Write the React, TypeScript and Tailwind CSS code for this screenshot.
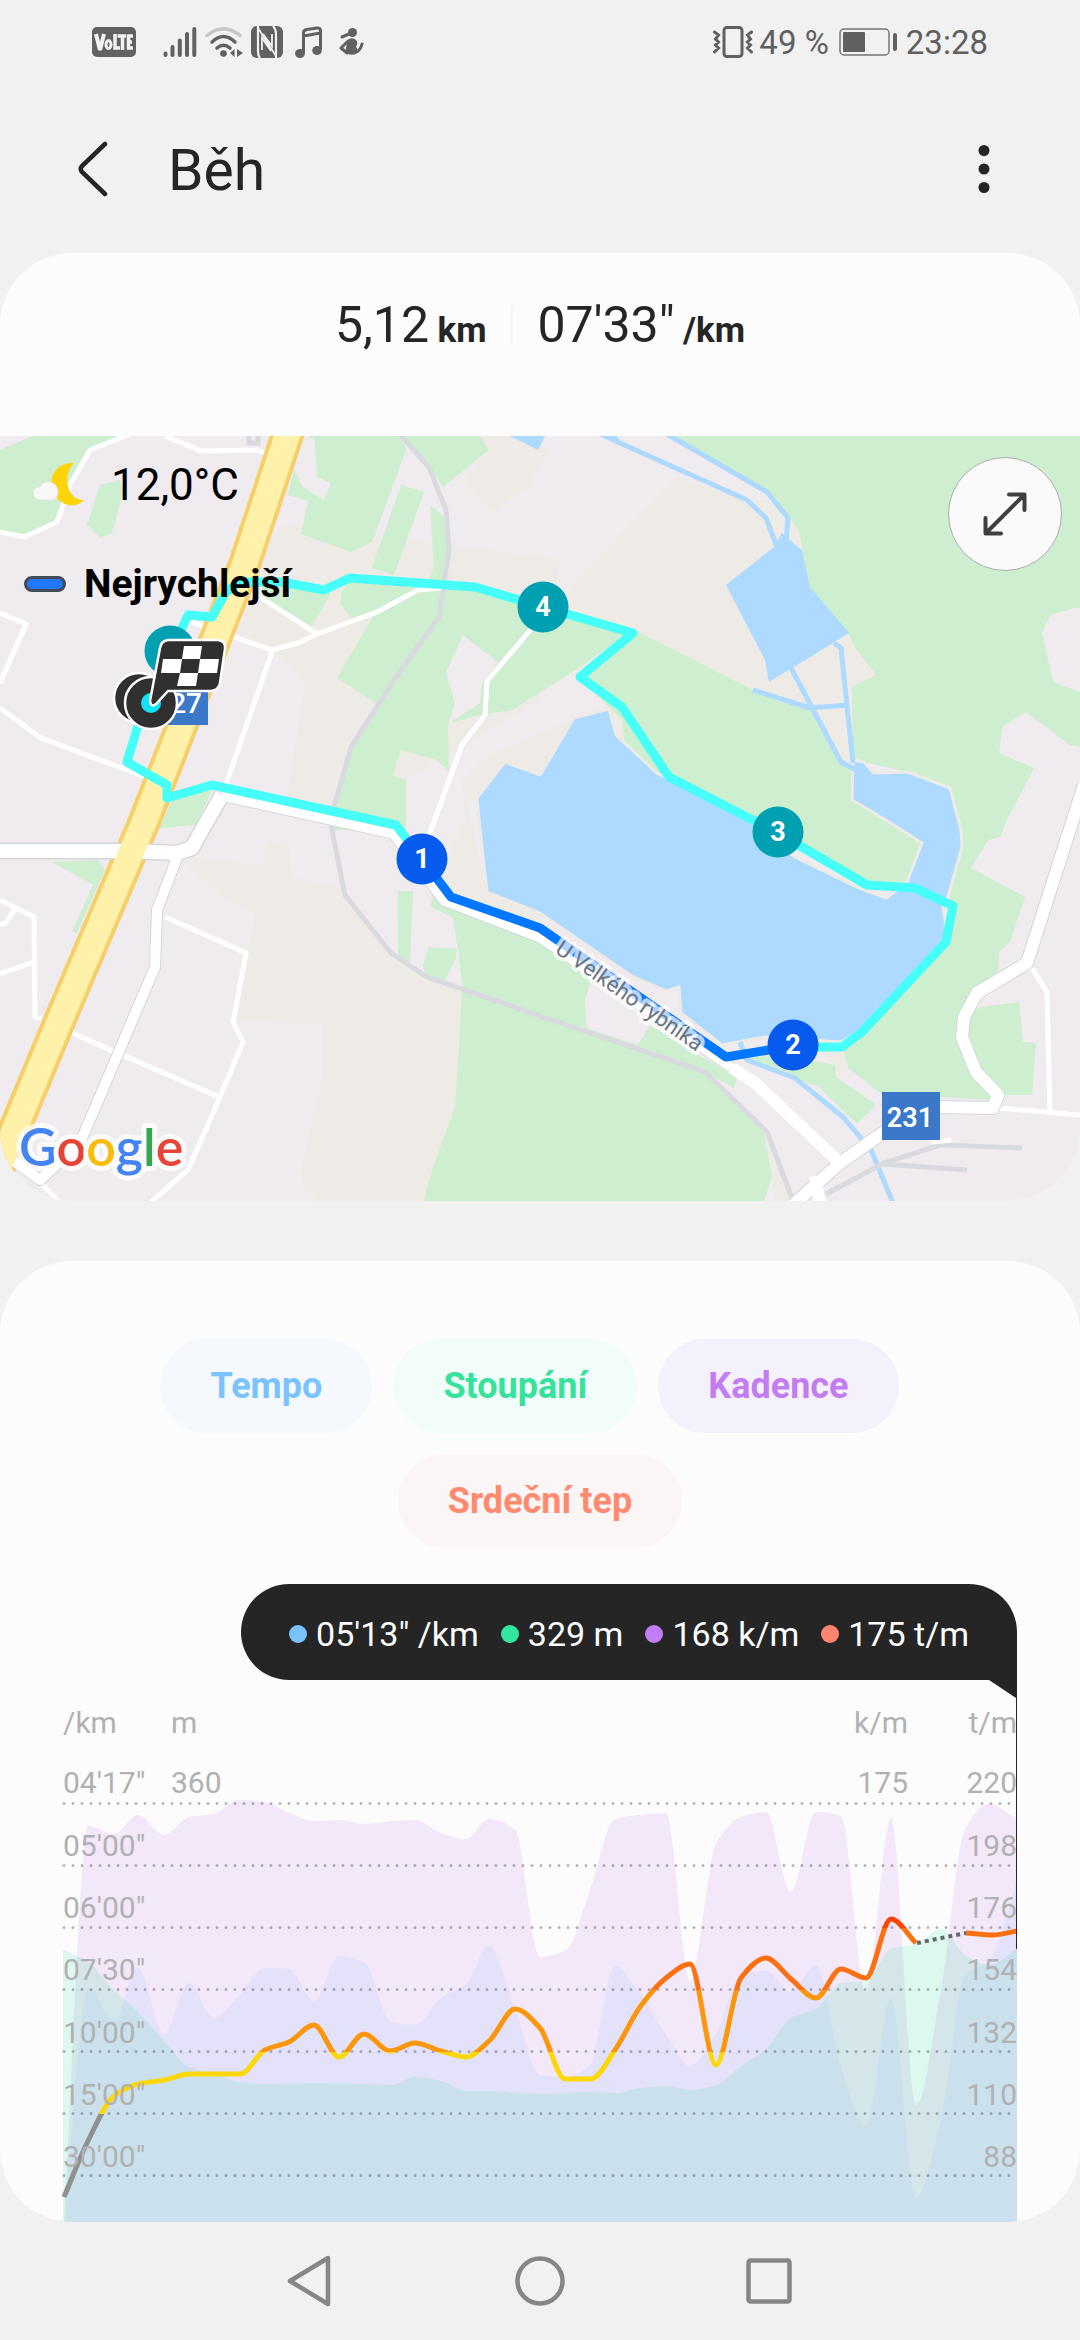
type Point = [number, number];

/** Smooth path through the points, without overshooting between neighbours. */
function smoothPath(points: Point[]): string {
  const n = points.length;
  const slopes = points.slice(1).map(([x, y], i) => (y - points[i][1]) / (x - points[i][0]));
  const tangents = points.map((_, i) => {
    if (i === 0) return slopes[0];
    if (i === n - 1) return slopes[n - 2];
    const a = slopes[i - 1];
    const b = slopes[i];
    return a * b <= 0 ? 0 : (2 * a * b) / (a + b);
  });
  let d = `M${points[0][0]} ${points[0][1]}`;
  for (let i = 1; i < n; i++) {
    const [x0, y0] = points[i - 1];
    const [x1, y1] = points[i];
    const h = (x1 - x0) / 3;
    d += `C${x0 + h} ${y0 + h * tangents[i - 1]} ${x1 - h} ${y1 - h * tangents[i]} ${x1} ${y1}`;
  }
  return d;
}

function areaPath(points: Point[]): string {
  const last = points[points.length - 1];
  return `${smoothPath(points)}L${last[0]} 2222L${points[0][0]} 2222Z`;
}

const cadence: Point[] = [
  [64, 2222], [85, 1840], [88, 1826], [114, 1834], [138, 1815], [164, 1835], [189, 1817], [214, 1814], [239, 1800], [265, 1802],
  [289, 1813], [314, 1821], [339, 1820], [364, 1824], [391, 1821], [415, 1820], [441, 1833], [466, 1839], [489, 1819],
  [515, 1830], [540, 1957], [566, 1950], [590, 1890], [615, 1819], [640, 1815], [666, 1813], [690, 1981], [716, 1844],
  [741, 1817], [766, 1812], [791, 1892], [816, 1812], [841, 1816], [866, 1992], [891, 1818], [916, 2105], [941, 1989],
  [965, 1829], [989, 1804], [1017, 1819],
];

const elevation: Point[] = [
  [63, 1950], [88, 1962], [114, 1990], [138, 2012], [164, 2041], [189, 2067], [214, 2074], [239, 2082], [265, 2084],
  [314, 2083], [364, 2084], [391, 2085], [415, 2077], [441, 2081], [466, 2091], [489, 2091], [540, 2094], [590, 2092],
  [615, 2093], [640, 2088], [666, 2086], [690, 2090], [716, 2085], [741, 2066], [766, 2049], [791, 2018], [816, 2009],
  [841, 1983], [866, 1981], [891, 1949], [916, 1944], [941, 1929], [965, 1955], [989, 1965], [1017, 1949],
];

const pace: Point[] = [
  [65, 2222], [84, 2000], [88, 1987], [114, 2021], [138, 1968], [164, 2034], [189, 1983], [214, 2018], [239, 1996], [265, 1968],
  [289, 1969], [314, 2001], [339, 1956], [364, 1962], [391, 2022], [415, 2025], [441, 1998], [466, 1984], [489, 1946],
  [515, 2009], [540, 2075], [566, 2077], [590, 2065], [615, 1966], [640, 1994], [666, 2035], [690, 2066], [716, 2034],
  [741, 1976], [766, 1971], [791, 1992], [816, 1965], [841, 2067], [866, 2126], [891, 1998], [916, 2197], [941, 2119],
  [965, 1976], [989, 1961], [1017, 1881],
];

const heartRate: Point[] = [
  [64, 2197], [88, 2141], [114, 2096], [138, 2084], [164, 2080], [189, 2074], [214, 2074], [240, 2074], [265, 2050],
  [289, 2042], [314, 2025], [339, 2057], [364, 2034], [390, 2051], [415, 2043], [441, 2051], [466, 2057], [490, 2040],
  [515, 2009], [540, 2028], [565, 2079], [591, 2079], [615, 2050], [640, 2007], [666, 1978], [690, 1964], [716, 2065],
  [741, 1978], [766, 1958], [791, 1979], [816, 1998], [841, 1969], [866, 1978], [891, 1919], [916, 1943],
];

const heartRateEnd: Point[] = [[966, 1933], [993, 1935], [1017, 1931]];

const gridLines = [1803, 1865, 1927, 1989, 2051, 2113, 2175];
const paceLabels = ["/km", "04'17\"", "05'00\"", "06'00\"", "07'30\"", "10'00\"", "15'00\"", "30'00\""];
const heartLabels = ["t/m", "220", "198", "176", "154", "132", "110", "88"];
const labelBaselines = [1733, 1793, 1856, 1918, 1980, 2043, 2105, 2167];

const kilometres = [
  { x: 170, y: 651, label: "5", fill: "#00a0b3" },
  { x: 543, y: 607, label: "4", fill: "#00a0b3" },
  { x: 778, y: 832, label: "3", fill: "#00a0b3" },
  { x: 793, y: 1045, label: "2", fill: "#065aee" },
  { x: 422, y: 859, label: "1", fill: "#065aee" },
];

const green = "#cdeecf";
const beige = "#eeebe6";
const water = "#aedaff";
const land = "#efebef";

function StatusBar() {
  return (
    <div className="flex h-[84px] items-center justify-between pl-[92px] pr-[92px] text-[33px] leading-none text-[#5f5f5f]">
      <div className="flex items-center">
        <span className="flex h-[30px] w-[44px] items-center justify-center rounded-[5px] bg-[#616161]">
          <svg width="40" height="24" viewBox="0 0 40 24" role="img" aria-label="VoLTE">
            <g fill="none" stroke="#f1f1f1" strokeWidth="4">
              <path d="M2 4L6 20L10 4" />
              <ellipse cx="14.500" cy="14.500" rx="2.500" ry="4" strokeWidth="3" />
              <path d="M21 4V18H26M23.500 6H32M28.500 6V20M39 6H34.500V18H39M34 12H38" strokeWidth="3.500" />
            </g>
          </svg>
        </span>
        <svg className="ml-[27px]" width="34" height="32" viewBox="0 0 34 32" aria-hidden="true">
          <g stroke="#616161" strokeWidth="4" strokeLinecap="round">
            <path d="M2.500 27.500V29M9.500 21V29M16.800 14.500V29M24 8V29M31.300 3V29" />
          </g>
        </svg>
        <svg className="ml-[8px]" width="38" height="32" viewBox="0 0 38 32" aria-hidden="true">
          <g fill="none" strokeLinecap="round" strokeWidth="3.500">
            <path d="M2 9.500Q18.500-4 35 9.500" stroke="#c6c6c6" />
            <path d="M7 16Q18.500 5 30 16M12 22Q18.500 16.500 25 22" stroke="#616161" />
          </g>
          <circle cx="18.500" cy="27.500" r="3.300" fill="#616161" />
          <path d="M25 27L29.500 23V31ZM38 27L32 23V31Z" fill="#616161" />
        </svg>
        <svg className="ml-[8px]" width="32" height="32" viewBox="0 0 32 32" aria-hidden="true">
          <rect width="32" height="32" rx="6" fill="#616161" />
          <path d="M7 0V25Q7 30 9 32M25 32V8Q25 3 22 0" fill="none" stroke="#f1f1f1" strokeWidth="2.200" />
          <path d="M7 2L25 30M11 24V12L20 25M21 8V20L12 8" fill="none" stroke="#f1f1f1" strokeWidth="1.800" />
        </svg>
        <svg className="ml-[12px]" width="28" height="32" viewBox="0 0 28 32" aria-hidden="true">
          <path d="M8.500 27V7Q8.500 4 12 3.500L22 2Q25.500 1.500 25.500 5V23M8.500 10L25.500 7" fill="none" stroke="#616161" strokeWidth="3" />
          <ellipse cx="5" cy="27.500" rx="5" ry="4.500" fill="#616161" />
          <ellipse cx="22" cy="24.500" rx="4.800" ry="4.500" fill="#616161" />
        </svg>
        <svg className="ml-[16px]" width="25" height="30" viewBox="0 0 25 30" aria-hidden="true">
          <circle cx="13.500" cy="5.500" r="4.500" fill="#616161" />
          <path d="M8 13Q14 9 18 14Q19 17 17 20Q21 24 16 27Q10 29 6 25Q8 19 8 13Z" fill="#616161" />
          <path d="M10 7L3 10M8 15L2 21L8 26M15 26Q21 25 23 17" fill="none" stroke="#616161" strokeWidth="3" strokeLinecap="round" strokeLinejoin="round" />
        </svg>
      </div>
      <div className="flex items-center">
        <svg width="40" height="32" viewBox="0 0 40 32" aria-hidden="true">
          <rect x="11" y="1.500" width="18" height="29" rx="3" fill="none" stroke="#616161" strokeWidth="3" />
          <path d="M1.500 6L5.500 9L2.500 13L5.500 16L2.500 19L5.500 22L1.500 26M38.500 6L34.500 9L37.500 13L34.500 16L37.500 19L34.500 22L38.500 26" fill="none" stroke="#616161" strokeWidth="3" strokeLinecap="round" />
        </svg>
        <span className="ml-[6px]">49 %</span>
        <svg className="ml-[10px]" width="58" height="28" viewBox="0 0 58 28" aria-hidden="true">
          <rect x="1" y="1" width="49" height="26" rx="4" fill="none" stroke="#767676" strokeWidth="1.500" />
          <rect x="4" y="4" width="22" height="20" rx="1" fill="#616161" />
          <rect x="54" y="5" width="4" height="18" rx="2" fill="#616161" />
        </svg>
        <span className="ml-[9px]">23:28</span>
      </div>
    </div>
  );
}

function RouteMap() {
  return (
    <svg className="block w-full" viewBox="0 436 1080 765" role="img" aria-label="Mapa trasy běhu">
      <rect y="436" width="1080" height="765" fill={land} />
      <g fill={beige}>
        <path d="M272 527L302 525L560 560L540 700L437 760L331 825L345 890L391 953L458 983L470 1050L430 1201H320L305 1190L301 1173L312 1120L322 1080V1024L238 1022L248 953L255 913L220 895L179 857L262 865L267 843L288 840V792L305 683L275 650L225 625Z" />
        <path d="M489 452L461 480L492 512L530 485L548 450L520 436H479Z" />
        <path d="M678 477L747 500L790 500L799 530L804 553L849 630L876 675L852 688L856 762L860 790L840 790L811 710L753 690L638 632L568 613L569 587Z" />
        <path d="M540 733L620 700L640 760L600 800H480L466 800L487 892L540 913V937L450 902L440 870L466 820L462 780L487 757Z" />
        <path d="M764 1133L772 1177L775 1201H800L780 1165Z" />
        <path d="M815 1045L845 1040L848 1068L838 1078L830 1065Z" />
      </g>
      <path d="M288 495L294 470L340 470L400 436H306V480L317 477L331 483L324 500L303 487Z" fill={land} />
      <path d="M393 890L430 893L453 918L458 983L427 973L391 953ZM288 840V800L331 815L345 887L291 877Z" fill={land} />
      <g fill={green}>
        <path d="M0 450L33 436H127L90 450L71 490L57 522L24 535L0 530Z" />
        <path d="M100 485L119 480L124 490L112 533L100 538L87 525Z" />
        <path d="M288 495L294 470L303 487L324 500L331 483L317 477L315 440L308 436H401L406 450L372 542L351 552L301 534L308 501Z" />
        <path d="M401 436H479L489 450L443 487L429 467Z" />
        <path d="M401 485L424 492L394 575L372 568Z" />
        <path d="M430 505L444 517L448 550L443 590L425 590L434 568Z" />
        <path d="M262 577L293 580L331 593L312 626L262 597Z" />
        <path d="M341 593L350 580L475 588L518 603L633 630L576 670L540 692L512 710L479 715L448 724L449 772L437 760L401 750L393 775L406 780V830H334V807L351 747L379 705L337 678L375 613L351 618L341 605Z" />
        <path d="M172 800L212 790L196 825L160 828Z" />
        <path d="M52 862L98 860L105 870L77 933L72 932L93 885Z" />
        <path d="M398 891H413L410 963L398 957ZM428 947L457 949L456 958L445 980L427 977L423 967Z" />
        <path d="M434 895L444 905L540 940L592 977L585 1007L587 1028L638 1045L650 1025L737 1078L734 1088L715 1078L764 1133L772 1177L764 1201H424L432 1170L455 1107L460 1033L462 983L458 950L453 918L430 906Z" />
        <path d="M673 436L767 490L788 517L799 530L803 553L810 587L848 633L855 647L876 675L852 687L853 760L909 772L950 787L962 830V840L950 897L943 945L862 1030L843 1048L848 1068L880 1093L990 1100L995 1098L974 1067L957 1020L982 990L998 970L999 952L1010 942L1025 897L971 868L988 840L1000 837L1007 820L1034 768L999 753L1002 727L1026 712L1070 745L1080 747V692L1053 682L1042 633L1050 615L1074 608H1080V436Z" />
        <path d="M981 1007L1019 1002L1023 1042L1036 1043L1032 1095H1002L974 1067L958 1020Z" />
        <path d="M638 632L753 690L812 710L840 760L853 770L852 800L905 830L922 843L906 882L866 884L779 835L740 825L655 775L624 740L622 720L578 676Z" />
        <path d="M747 1058L780 1055L835 1065L836 1077L876 1105L857 1124L819 1087L795 1078Z" />
      </g>
      <path d="M463 635L498 662L482 683L480 703L448 724L455 703L446 672Z" fill={land} />
      <path d="M585 1000L592 977L675 1030L650 1025L638 1045L587 1028Z" fill={land} />

      <g fill={water} stroke={beige} strokeWidth="3">
        <path d="M505 762L540 775L574 718L609 709L616 735L657 773L753 823L795 857L857 887L886 898L907 882L922 843L886 820L852 800L853 760L864 762L874 773L908 772L950 788L961 830L962 847L948 897L943 907L948 942L862 1030L841 1042L815 1040L764 1037L722 1045L681 1013L679 987L666 991L633 977L540 913L487 892L479 820L477 798Z" />
      </g>
      <g fill={water}>
        <path d="M726 585L774 547L782 533L790 540L802 550L810 587L849 633L833 643L769 682L765 660Z" />
        <path d="M510 436L538 450L545 436Z" />
      </g>
      <g fill="none" stroke={water} strokeWidth="5" strokeLinejoin="round">
        <path d="M600 434L747 500L766 518L777 547M612 434L618 442M667 434L767 492L788 518L786 542" />
        <path d="M753 690L810 708L848 705M791 668L841 762L856 770M834 643L841 648L853 763" />
        <path d="M740 1042L747 1060L795 1078L843 1117L871 1150L893 1203" />
      </g>

      <g fill="none" stroke="#d8dadf" strokeWidth="5">
        <path d="M401 436L429 467L446 510L449 550L439 617L396 677L351 747L334 807L331 825L345 895L391 953L427 977L540 1016L705 1072L767 1132L793 1201" />
        <path d="M826 1194L884 1163L940 1145L1022 1148M884 1164L967 1170" />
        <path d="M249 434V443H258V434" />
      </g>

      <g fill="none" stroke="#ffffff" strokeWidth="5" strokeLinejoin="round">
        <path d="M0 532L24 537L57 522L71 483L90 450L130 434M165 436L201 451L257 450L266 453" />
        <path d="M0 613L26 624L0 683M0 708L41 738L146 777" />
        <path d="M189 621L234 637L272 650L298 643L317 634L377 612L418 590L441 588M260 597L317 634M272 652L224 790" />
        <path d="M532 628L487 681L485 715L462 745L420 860" />
        <path d="M165 917L246 953L233 1022L243 1042L220 1097L188 1170L150 1203M72 1033L127 1057L219 1097" />
        <path d="M0 900L34 917L35 1017L41 1019M0 974L34 962M0 925L6 923L15 908M42 1184L60 1203" />
        <path d="M1032 968L1047 992L1050 1115M998 1108L1080 1115M932 1142L951 1140" />
      </g>

      <path d="M289 430L245 563L145 820L60 1020L8 1145L-8 1185" fill="none" stroke="#f6cf69" strokeWidth="33" />
      <g fill="none" strokeLinejoin="round">
        <g stroke="#d3d6db">
          <path d="M0 851H130L177 853L192 848L203 828L222 795" strokeWidth="17" />
          <path d="M178 855L157 910L155 967L80 1143L40 1180L10 1158" strokeWidth="12" />
          <path d="M222 796L393 834L444 901L540 938L726 1064L755 1083L840 1163" strokeWidth="11" />
          <path d="M793 1205L840 1163L884 1132L912 1110L940 1107L993 1108L998 1095L976 1072L962 1037L964 1017L977 993L1027 963L1084 785" strokeWidth="14" />
        </g>
        <g stroke="#ffffff">
          <path d="M0 851H130L177 853L192 848L203 828L222 795" strokeWidth="14" />
          <path d="M178 855L157 910L155 967L80 1143L40 1180L10 1158" strokeWidth="10" />
          <path d="M222 796L393 834L444 901L540 938L726 1064L755 1083L840 1163" strokeWidth="9" />
          <path d="M732 1068L755 1083L840 1163M815 1176L820 1203" strokeWidth="12" />
          <path d="M793 1205L840 1163L884 1132L912 1110L940 1107L993 1108L998 1095L976 1072L962 1037L964 1017L977 993L1027 963L1084 785" strokeWidth="12" />
        </g>
      </g>
      <path d="M289 430L245 563L145 820L60 1020L8 1145L-8 1185" fill="none" stroke="#fff1aa" strokeWidth="25" />

      <rect x="160" y="683" width="48" height="42" fill="#3b78c8" />
      <text x="202" y="713" textAnchor="end" fontSize="28" fontWeight="500" fill="#ffffff">27</text>

      <g fill="none" strokeWidth="9" strokeLinejoin="round">
        <path d="M145 703L127 762L167 785V798L212 785L396 825L422 859" stroke="#45fff8" />
        <path d="M793 1047H842L862 1032L946 942L953 906L915 888L867 885L778 833L669 777L622 707L580 677L633 633L543 607L475 587L350 578L324 590L282 582L240 582L226 592L212 617L188 615L170 655" stroke="#45fff8" />
        <path d="M422 859L451 897L540 928L726 1057L793 1046" stroke="#0077ff" />
      </g>

      <text
        transform="translate(554 952) rotate(35)"
        fontSize="22"
        fill="#6b737c"
        stroke="#ffffff"
        strokeOpacity="0.7"
        strokeWidth="8"
        strokeLinejoin="round"
        paintOrder="stroke"
      >
        U Velkého rybníka
      </text>

      {kilometres.map((km) => (
        <g key={km.label}>
          <circle cx={km.x} cy={km.y} r="25.500" fill={km.fill} />
          <text x={km.x} y={km.y + 9} textAnchor="middle" fontSize="27" fontWeight="700" fill="#ffffff">
            {km.label}
          </text>
        </g>
      ))}

      <g stroke="#ffffff" strokeWidth="2.500">
        <circle cx="139" cy="698" r="25" fill="#303030" />
        <circle cx="151" cy="703" r="26" fill="#303030" />
        <circle cx="151" cy="703" r="10" fill="#12e3f5" stroke="none" />
        <path d="M168 640H218Q226 641 225 649L220 683Q219 690 211 691H168L156 704Q151 708 150 701L160 648Q161 641 168 640Z" fill="#303030" />
        <path d="M184 646H202L200 659H182ZM163 659H182L180 673H161ZM200 659H219L217 673H198ZM180 673H198L196 686H177Z" fill="#ffffff" stroke="none" />
      </g>

      <rect x="882" y="1092" width="58" height="48" fill="#3b78c8" />
      <text x="910" y="1127" textAnchor="middle" fontSize="27" fontWeight="600" fill="#ffffff">231</text>

      <text
        x="19"
        y="1166"
        fontFamily="Lato, sans-serif"
        fontSize="52"
        fontWeight="600"
        stroke="#ffffff"
        strokeOpacity="0.75"
        strokeWidth="10"
        strokeLinejoin="round"
        paintOrder="stroke"
      >
        <tspan fill="#4484f2">G</tspan>
        <tspan fill="#e64437">o</tspan>
        <tspan fill="#fabc08">o</tspan>
        <tspan fill="#4484f2">g</tspan>
        <tspan fill="#37a653">l</tspan>
        <tspan fill="#e64437">e</tspan>
      </text>
    </svg>
  );
}

function Chart() {
  return (
    <svg className="block w-full" viewBox="0 1680 1080 542" role="img" aria-label="Graf tempa, stoupání, kadence a srdečního tepu">
      <defs>
        <linearGradient id="zones" gradientUnits="userSpaceOnUse" x1="0" x2="0" y1="1866" y2="2238">
          <stop offset="0.167" stopColor="#f94500" />
          <stop offset="0.167" stopColor="#fb7010" />
          <stop offset="0.333" stopColor="#fb7010" />
          <stop offset="0.333" stopColor="#fc960a" />
          <stop offset="0.500" stopColor="#fc960a" />
          <stop offset="0.500" stopColor="#fcd80a" />
          <stop offset="0.667" stopColor="#fcd80a" />
          <stop offset="0.667" stopColor="#909090" />
        </linearGradient>
      </defs>
      <path d={areaPath(cadence)} fill="#c47bf5" fillOpacity="0.16" />
      <path d={areaPath(elevation)} fill="#2fe59b" fillOpacity="0.15" />
      <path d={areaPath(pace)} fill="#80c4ff" fillOpacity="0.13" />
      <g stroke="#000000" strokeOpacity="0.28" strokeWidth="3" strokeLinecap="round" strokeDasharray="0 9">
        {gridLines.map((y) => (
          <path key={y} d={`M64 ${y}.500H1016`} />
        ))}
      </g>
      <g fill="none" stroke="url(#zones)" strokeWidth="5">
        <path d={smoothPath(heartRate)} />
        <path d={smoothPath(heartRateEnd)} />
      </g>
      <path d="M917 1943L966 1933" stroke="#666666" strokeWidth="4" strokeDasharray="4 4" />
      <g fontSize="30" fill="#b1b1b1">
        {paceLabels.map((label, i) => (
          <text key={label} x="63" y={labelBaselines[i]}>{label}</text>
        ))}
        <text x="171" y="1733">m</text>
        <text x="171" y="1793">360</text>
        <text x="908" y="1733" textAnchor="end">k/m</text>
        <text x="908" y="1793" textAnchor="end">175</text>
        {heartLabels.map((label, i) => (
          <text key={label} x="1017" y={labelBaselines[i]} textAnchor="end">{label}</text>
        ))}
      </g>
      <path d="M989 1680H1017V1698H1016Z" fill="#252525" />
      <path d="M1016.500 1690V1949" stroke="#252525" />
    </svg>
  );
}

function Reading({ dot, children }: { dot: string; children: string }) {
  return (
    <span className="flex items-center gap-[9px]">
      <span className={`size-[18px] rounded-full ${dot}`} />
      {children}
    </span>
  );
}

export default function App() {
  return (
    <div className="min-h-screen bg-[#f1f1f1] font-[Roboto,sans-serif] text-[#252525]">
      <StatusBar />
      <header className="flex h-[169px] items-center pl-[78px] pr-[84px]">
        <button type="button" aria-label="Zpět">
          <svg width="30" height="56" viewBox="0 0 30 56">
            <path d="M27 3L4 25Q1.500 28 4 31L27 53" fill="none" stroke="#252525" strokeWidth="4.500" strokeLinecap="round" />
          </svg>
        </button>
        <h1 className="ml-[60px] pt-1 text-[57px] leading-[64px]">Běh</h1>
        <button type="button" aria-label="Další možnosti" className="ml-auto">
          <svg width="24" height="50" viewBox="0 0 24 50" fill="#252525">
            <circle cx="12" cy="6.500" r="5.500" />
            <circle cx="12" cy="25" r="5.500" />
            <circle cx="12" cy="43.500" r="5.500" />
          </svg>
        </button>
      </header>

      <main>
        <section className="overflow-hidden rounded-[72px] bg-[#fcfcfc]">
          <div className="flex h-[183px] items-start justify-center pt-[42px]">
            <p className="text-[50px] leading-[60px]">
              5,12 <span className="-ml-1 text-[35px] font-bold">km</span>
            </p>
            <div className="mx-6 mt-[10px] h-10 w-[3px] bg-[#f6f6f6]" />
            <p className="text-[50px] leading-[60px]">
              07'33" <span className="-ml-1 text-[35px] font-bold">/km</span>
            </p>
          </div>
          <div className="relative">
            <RouteMap />
            <div className="absolute left-6 top-[21px] text-black">
              <div className="flex items-center">
                <svg className="ml-2" width="54" height="46" viewBox="0 0 54 46" role="img" aria-label="Polojasno, noc">
                  <path d="M42 1C20 0 14 22 24 35C32 45 45 46 52 38C36 39 29 14 42 1Z" fill="#fdd40a" />
                  <path d="M8 38Q1 37 1 31Q1 25 8 25Q11 19 17 20Q25 21 26 29Q26 38 20 38Z" fill="#f7f7f7" stroke="#e6e6e6" />
                </svg>
                <span className="ml-[25px] text-[44px] leading-[56px]">12,0°C</span>
              </div>
              <div className="mt-[46px] flex items-center">
                <span className="h-4 w-[42px] rounded-full border-3 border-[#444b58] bg-[#2277ff]" />
                <span className="ml-[18px] text-[39px] font-bold leading-[50px]">Nejrychlejší</span>
              </div>
            </div>
            <button
              type="button"
              aria-label="Zvětšit mapu"
              className="absolute right-[18px] top-[21px] flex size-[114px] items-center justify-center rounded-full border border-[#acacac] bg-[#fafafa]"
            >
              <svg width="46" height="46" viewBox="0 0 46 46" fill="none" stroke="#404040" strokeWidth="4" strokeLinecap="round" strokeLinejoin="round">
                <path d="M4 42L42 4M27 3.500H42.500V19M3.500 27V42.500H19" />
              </svg>
            </button>
          </div>
        </section>

        <section className="mt-[60px] overflow-hidden rounded-[72px] bg-[#fcfcfc]">
          <div className="flex flex-col items-center gap-[21px] pt-[78px] text-[36px] font-bold leading-[42px]">
            <div className="flex gap-[21px] pr-[21px]">
              <button type="button" className="rounded-full bg-[#f5f9fd] px-[50px] py-[26px] text-[#7ac3ff]">Tempo</button>
              <button type="button" className="rounded-full bg-[#f2fdf9] px-[50px] py-[26px] text-[#37e29c]">Stoupání</button>
              <button type="button" className="rounded-full bg-[#f5f1fc] px-[50px] py-[26px] text-[#c27ef0]">Kadence</button>
            </div>
            <button type="button" className="rounded-full bg-[#fcf5f5] px-[50px] py-[26px] text-[#ff8a70]">Srdeční tep</button>
          </div>
          <div className="mr-[63px] mt-9 flex justify-end">
            <div className="flex h-24 items-center gap-[22px] rounded-l-[48px] rounded-tr-[48px] bg-[#252525] px-12 pt-1 text-[34px] text-[#fcfcfc]">
              <Reading dot="bg-[#7ac3ff]">05'13" /km</Reading>
              <Reading dot="bg-[#33e69e]">329 m</Reading>
              <Reading dot="bg-[#c27ef5]">168 k/m</Reading>
              <Reading dot="bg-[#ff8570]">175 t/m</Reading>
            </div>
          </div>
          <Chart />
        </section>
      </main>

      <nav className="flex h-[118px] items-center justify-center gap-[180px]" aria-label="Systémová navigace">
        <button type="button" aria-label="Zpět">
          <svg width="50" height="54" viewBox="0 0 50 54" fill="none" stroke="#868686" strokeWidth="4.500" strokeLinejoin="round">
            <path d="M5 27L43 4V50Z" />
          </svg>
        </button>
        <button type="button" aria-label="Domů">
          <svg width="50" height="54" viewBox="0 0 50 54" fill="none" stroke="#868686" strokeWidth="4.500">
            <circle cx="25" cy="27" r="22.500" />
          </svg>
        </button>
        <button type="button" aria-label="Poslední aplikace">
          <svg width="50" height="54" viewBox="0 0 50 54" fill="none" stroke="#868686" strokeWidth="4.500">
            <rect x="3.500" y="6.500" width="41" height="41" rx="2" />
          </svg>
        </button>
      </nav>
    </div>
  );
}
